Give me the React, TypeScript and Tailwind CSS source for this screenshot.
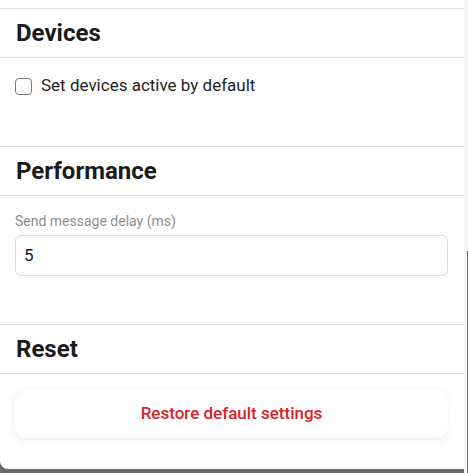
import React from "react";

function SectionHeader({ title }: { title: string }) {
  return (
    <div className="border-t border-b border-[#dedede] px-4 py-2">
      <h2 className="text-[24px] leading-8 font-bold text-[#1b1b1b]">{title}</h2>
    </div>
  );
}

export default function App() {
  return (
    <div
      className="w-[468px] h-[473px] bg-[#6b6b6b] flex flex-col overflow-hidden"
      style={{ fontFamily: "Roboto, 'Noto Sans', sans-serif" }}
    >
      <div className="flex flex-1 min-h-0">
        <div className="w-[464px] h-[469px] bg-white rounded-bl-lg flex flex-col pt-2">
          <SectionHeader title="Devices" />
          <div className="pl-[15px] pr-4 pt-4 pb-[48px] -mt-px">
            <label className="flex items-center gap-[9px] h-6 mt-px">
              <span className="w-[17px] h-[17px] rounded-[4px] border border-[#7a7a7a] bg-white" />
              <span className="text-[17px] text-[#1f1f1f]">Set devices active by default</span>
            </label>
          </div>
          <SectionHeader title="Performance" />
          <div className="pl-[15px] pr-4 pt-4 pb-[48px] -mt-px">
            <div className="text-[14px] leading-5 text-[#8f8f8f]">Send message delay (ms)</div>
            <div className="mt-[4px] h-[41px] rounded-[6px] border border-[#dcdcdc] flex items-center px-2">
              <span className="text-[17px] text-[#1a1a1a]">5</span>
            </div>
          </div>
          <SectionHeader title="Reset" />
          <div className="pl-[15px] pr-4 pt-[17px] -mt-px">
            <button className="w-full h-[48px] rounded-xl bg-white shadow-[0_2px_8px_rgba(0,0,0,0.08)] text-[17px] font-medium text-[#d8232a]">
              Restore default settings
            </button>
          </div>
        </div>
        <div className="flex flex-col w-[4px]">
          <div className="flex h-full">
            <div className="w-[3px] bg-[#f7f7f7]" />
            <div className="w-[1px] flex flex-col">
              <div className="h-[251px] bg-[#f7f7f7]" />
              <div className="flex-1 bg-[#6b6b6b]" />
            </div>
          </div>
        </div>
      </div>
    </div>
  );
}
